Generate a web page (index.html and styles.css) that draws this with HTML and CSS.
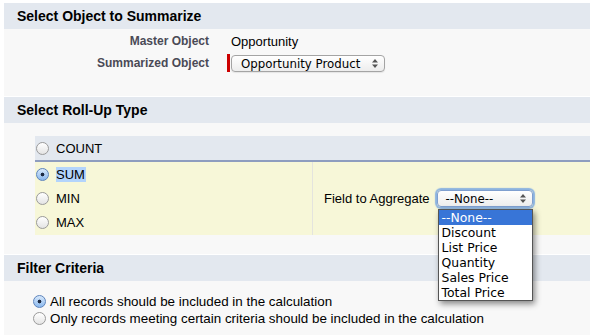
FILE: index.html
```html
<!DOCTYPE html>
<html lang="en">
<head>
    <meta charset="UTF-8">
    <title>Roll-Up Summary Field</title>
    <link rel="stylesheet" href="styles.css">
</head>
<body>
    <div class="page">
        <!-- Object -->
        <div class="section">
            <div class="section-head">Select Object to Summarize</div>
            <div class="section-body summary-body">
                <div class="field-row">
                    <div class="label">Master Object</div>
                    <div class="value">Opportunity</div>
                </div>
                <div class="field-row">
                    <div class="label">Summarized Object</div>
                    <div class="value required">
                        <div class="select object-select">
                            <span>Opportunity Product</span>
                            <svg class="arrows" width="6" height="9" viewBox="0 0 6 9"><path d="M3 0 L6 3.5 H0 Z M3 9 L6 5.5 H0 Z" fill="#555"/></svg>
                        </div>
                    </div>
                </div>
            </div>
        </div>

        <!-- Roll-up type -->
        <div class="section">
            <div class="section-head">Select Roll-Up Type</div>
            <div class="section-body rollup-body">
                <div class="count-row">
                    <span class="radio"></span>
                    <span>COUNT</span>
                </div>
                <div class="agg-rows">
                    <div class="radio-list">
                        <div class="option"><span class="radio checked"></span><span class="selected">SUM</span></div>
                        <div class="option"><span class="radio"></span><span>MIN</span></div>
                        <div class="option"><span class="radio"></span><span>MAX</span></div>
                    </div>
                    <div class="agg-field">
                        <span class="agg-label">Field to Aggregate</span>
                        <div class="select-wrap">
                            <div class="select field-select">
                                <span>--None--</span>
                                <svg class="arrows" width="6" height="9" viewBox="0 0 6 9"><path d="M3 0 L6 3.5 H0 Z M3 9 L6 5.5 H0 Z" fill="#555"/></svg>
                            </div>
                            <ul class="dropdown">
                                <li class="active">--None--</li>
                                <li>Discount</li>
                                <li>List Price</li>
                                <li>Quantity</li>
                                <li>Sales Price</li>
                                <li>Total Price</li>
                            </ul>
                        </div>
                    </div>
                </div>
            </div>
        </div>

        <!-- Filter -->
        <div class="section">
            <div class="section-head">Filter Criteria</div>
            <div class="section-body filter-body">
                <div class="filter-option"><span class="radio checked"></span><span>All records should be included in the calculation</span></div>
                <div class="filter-option"><span class="radio"></span><span>Only records meeting certain criteria should be included in the calculation</span></div>
            </div>
        </div>
    </div>
</body>
</html>
```

FILE: styles.css
```css
/* Page */
body {
    margin: 0;
    background: #fff;
    color: #000;
    font-family: "Liberation Sans", Arial, sans-serif;
    font-size: 13px;
}

.page {
    padding: 3px 0 0 4px;
}

.section + .section {
    margin-top: 1px;
}

.section-head {
    height: 26px;
    line-height: 26px;
    padding-left: 13px;
    background: #e3e8ef;
    font-size: 14px;
    font-weight: bold;
}

.section-body {
    background: #f8f8f8;
}

/* Object section */
.summary-body {
    padding: 1px 0 22px;
}

.field-row {
    display: flex;
    align-items: center;
    height: 22px;
}

.label {
    width: 205px;
    padding-right: 18px;
    text-align: right;
    font-size: 12px;
    font-weight: bold;
    color: #4a4a56;
}

.value {
    padding-left: 4px;
}

.value.required {
    display: flex;
    height: 18px;
    padding-left: 1px;
    border-left: 3px solid #c00;
}

/* Fake selects */
.select {
    display: flex;
    align-items: center;
    justify-content: space-between;
    box-sizing: border-box;
    height: 17px;
    padding: 0 6px 0 9px;
    border: 1px solid #a4a4a4;
    border-radius: 4px;
    background: linear-gradient(#fff, #ededed);
    box-shadow: 0 1px 1px rgba(0, 0, 0, 0.08);
    font-family: "DejaVu Sans", sans-serif;
    font-size: 11.8px;
}

.object-select {
    width: 154px;
    margin-top: 1px;
}

.field-select {
    width: 96px;
    padding-left: 8px;
    border-color: #7f9fcf;
    box-shadow: 0 0 1px 2px rgba(104, 156, 226, 0.75);
}

.arrows {
    flex: none;
}

/* Roll-up section */
.rollup-body {
    padding: 13px 0 19px 31px;
}

.count-row {
    display: flex;
    align-items: center;
    gap: 7px;
    height: 24px;
    padding-left: 1px;
    background: #e3e8ef;
    border-bottom: 2px solid #8e9dbf;
}

.agg-rows {
    display: grid;
    grid-template-columns: 278px 1fr;
    background: #f7f7d8;
}

.radio-list {
    padding-bottom: 1px;
    border-right: 1px solid #e4e4de;
}

.option {
    display: flex;
    align-items: center;
    gap: 7px;
    height: 24px;
    padding-left: 1px;
}

.selected {
    background: #b3d4fc;
    padding-right: 1px;
}

.agg-field {
    display: flex;
    align-items: center;
    gap: 7px;
    padding-left: 11px;
}

.select-wrap {
    position: relative;
}

.dropdown {
    position: absolute;
    top: 19px;
    left: 1px;
    width: 93px;
    margin: 0;
    padding: 0;
    list-style: none;
    background: #fff;
    border: 1px solid #555;
    box-shadow: 2px 3px 6px rgba(0, 0, 0, 0.45);
    font-family: "DejaVu Sans", sans-serif;
    font-size: 12.4px;
    z-index: 2;
}

.dropdown li {
    height: 15px;
    line-height: 15px;
    padding-left: 3px;
}

.dropdown li.active {
    background: #3875d7;
    color: #fff;
}

/* Filter section */
.filter-body {
    padding: 12px 0 9px 29px;
    font-size: 13.4px;
}

.filter-option {
    display: flex;
    align-items: center;
    gap: 4px;
    height: 17px;
}

/* Radios */
.radio {
    flex: none;
    box-sizing: border-box;
    width: 13px;
    height: 13px;
    border: 1px solid #9a9a9a;
    border-radius: 50%;
    background: linear-gradient(#fff, #e4e4e4);
}

.radio.checked {
    border-color: #5d84bc;
    background: radial-gradient(circle, #1d2b44 0 1.6px, transparent 2.2px), linear-gradient(#d8e9fb, #8ab8ee);
}
```
